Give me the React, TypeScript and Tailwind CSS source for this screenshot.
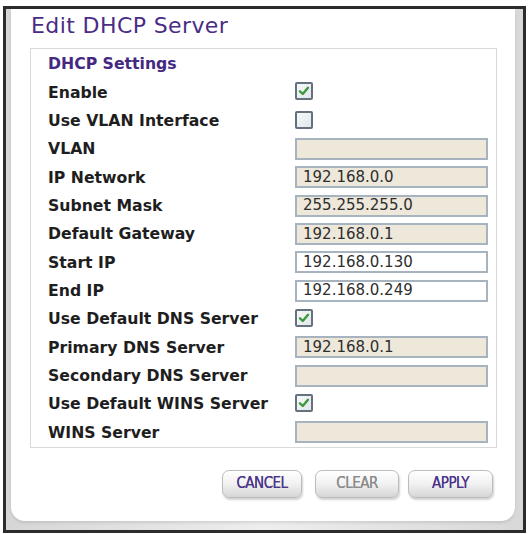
import React from "react";

type Row =
  | { label: string; kind: "check"; checked: boolean }
  | { label: string; kind: "input"; value: string; editable?: boolean };

const rows: Row[] = [
  { label: "Enable", kind: "check", checked: true },
  { label: "Use VLAN Interface", kind: "check", checked: false },
  { label: "VLAN", kind: "input", value: "" },
  { label: "IP Network", kind: "input", value: "192.168.0.0" },
  { label: "Subnet Mask", kind: "input", value: "255.255.255.0" },
  { label: "Default Gateway", kind: "input", value: "192.168.0.1" },
  { label: "Start IP", kind: "input", value: "192.168.0.130", editable: true },
  { label: "End IP", kind: "input", value: "192.168.0.249", editable: true },
  { label: "Use Default DNS Server", kind: "check", checked: true },
  { label: "Primary DNS Server", kind: "input", value: "192.168.0.1" },
  { label: "Secondary DNS Server", kind: "input", value: "" },
  { label: "Use Default WINS Server", kind: "check", checked: true },
  { label: "WINS Server", kind: "input", value: "" },
];

function CheckBox({ checked }: { checked: boolean }) {
  return (
    <span className="flex h-[18px] w-[18px] -translate-y-[1px] items-center justify-center rounded-[2px] border-2 border-[#64717e] bg-gradient-to-br from-[#f7f8f8] to-[#e3e7ea]">
      {checked && (
        <svg width="12" height="12" viewBox="0 0 12 12">
          <path
            d="M2 6.3 L4.8 9 L10 2.8"
            fill="none"
            stroke="#3b9a3e"
            strokeWidth="2.4"
            strokeLinecap="round"
            strokeLinejoin="round"
          />
        </svg>
      )}
    </span>
  );
}

function Field({ value, editable }: { value: string; editable?: boolean }) {
  return (
    <div
      className={
        "flex h-[22px] w-[193px] items-center border-2 border-[#a7b3bf] pl-[6px] text-[15px] leading-none text-[#2e2e2e] " +
        (editable ? "bg-white" : "bg-[#ede8da]")
      }
      style={{ fontFamily: '"DejaVu Sans", Verdana, sans-serif' }}
    >
      {value}
    </div>
  );
}

function Button({ label, tone, width }: { label: string; tone: "main" | "muted"; width: string }) {
  return (
    <div
      className={
        "flex h-[28px] items-center justify-center rounded-[7px] border border-[#bcbcbc] bg-gradient-to-b from-[#ffffff] via-[#f1f1f1] to-[#d6d6d6] shadow-[1px_2px_2px_rgba(0,0,0,0.18)] " +
        width
      }
    >
      <span
        className={
          "text-[15px] font-normal tracking-[-0.5px] [font-stretch:condensed] [text-shadow:0_0_0.6px_currentColor] " +
          (tone === "main" ? "text-[#4b368b]" : "text-[#8b8b8b]")
        }
        style={{ fontFamily: '"DejaVu Sans Condensed", "DejaVu Sans", sans-serif' }}
      >
        {label}
      </span>
    </div>
  );
}

export default function App() {
  return (
    <div className="h-[534px] w-[528px] bg-white">
      <div className="ml-[3px] mt-[6px] h-[527px] w-[523px] border-[3px] border-[#2c2c2c] bg-gradient-to-r from-[#d6d6d6] via-[#eeeeee] to-[#d8d8d8]">
        <div className="ml-[5px] h-[512px] w-[504px] rounded-b-[14px] bg-white shadow-[0_2px_3px_rgba(0,0,0,0.1)]">
          <div
            className="ml-[20px] h-[30px] pt-[3px] text-[22px] leading-[28px] tracking-[0.4px] text-[#4a2c86]"
            style={{ fontFamily: '"DejaVu Sans", Verdana, sans-serif' }}
          >
            Edit DHCP Server
          </div>
          <div className="ml-[19px] mt-[9px] w-[467px] border border-[#d9d9d9] pt-[1px]">
            <div
              className="flex h-[28.33px] items-center pl-[17px] text-[15.7px] font-bold text-[#45287f]"
              style={{ fontFamily: '"DejaVu Sans", Verdana, sans-serif' }}
            >
              DHCP Settings
            </div>
            {rows.map((r) => (
              <div key={r.label} className="flex h-[28.33px] items-center">
                <div
                  className="w-[264px] pl-[17px] text-[15.7px] font-bold text-[#1e1e1e]"
                  style={{ fontFamily: '"DejaVu Sans", Verdana, sans-serif' }}
                >
                  {r.label}
                </div>
                {r.kind === "check" ? (
                  <CheckBox checked={r.checked} />
                ) : (
                  <Field value={r.value} editable={r.editable} />
                )}
              </div>
            ))}
          </div>
          <div className="mr-[22px] mt-[22px] flex justify-end">
            <Button label="CANCEL" tone="main" width="w-[80px]" />
            <div className="w-[13px]" />
            <Button label="CLEAR" tone="muted" width="w-[84px]" />
            <div className="w-[9px]" />
            <Button label="APPLY" tone="main" width="w-[85px]" />
          </div>
        </div>
      </div>
    </div>
  );
}
